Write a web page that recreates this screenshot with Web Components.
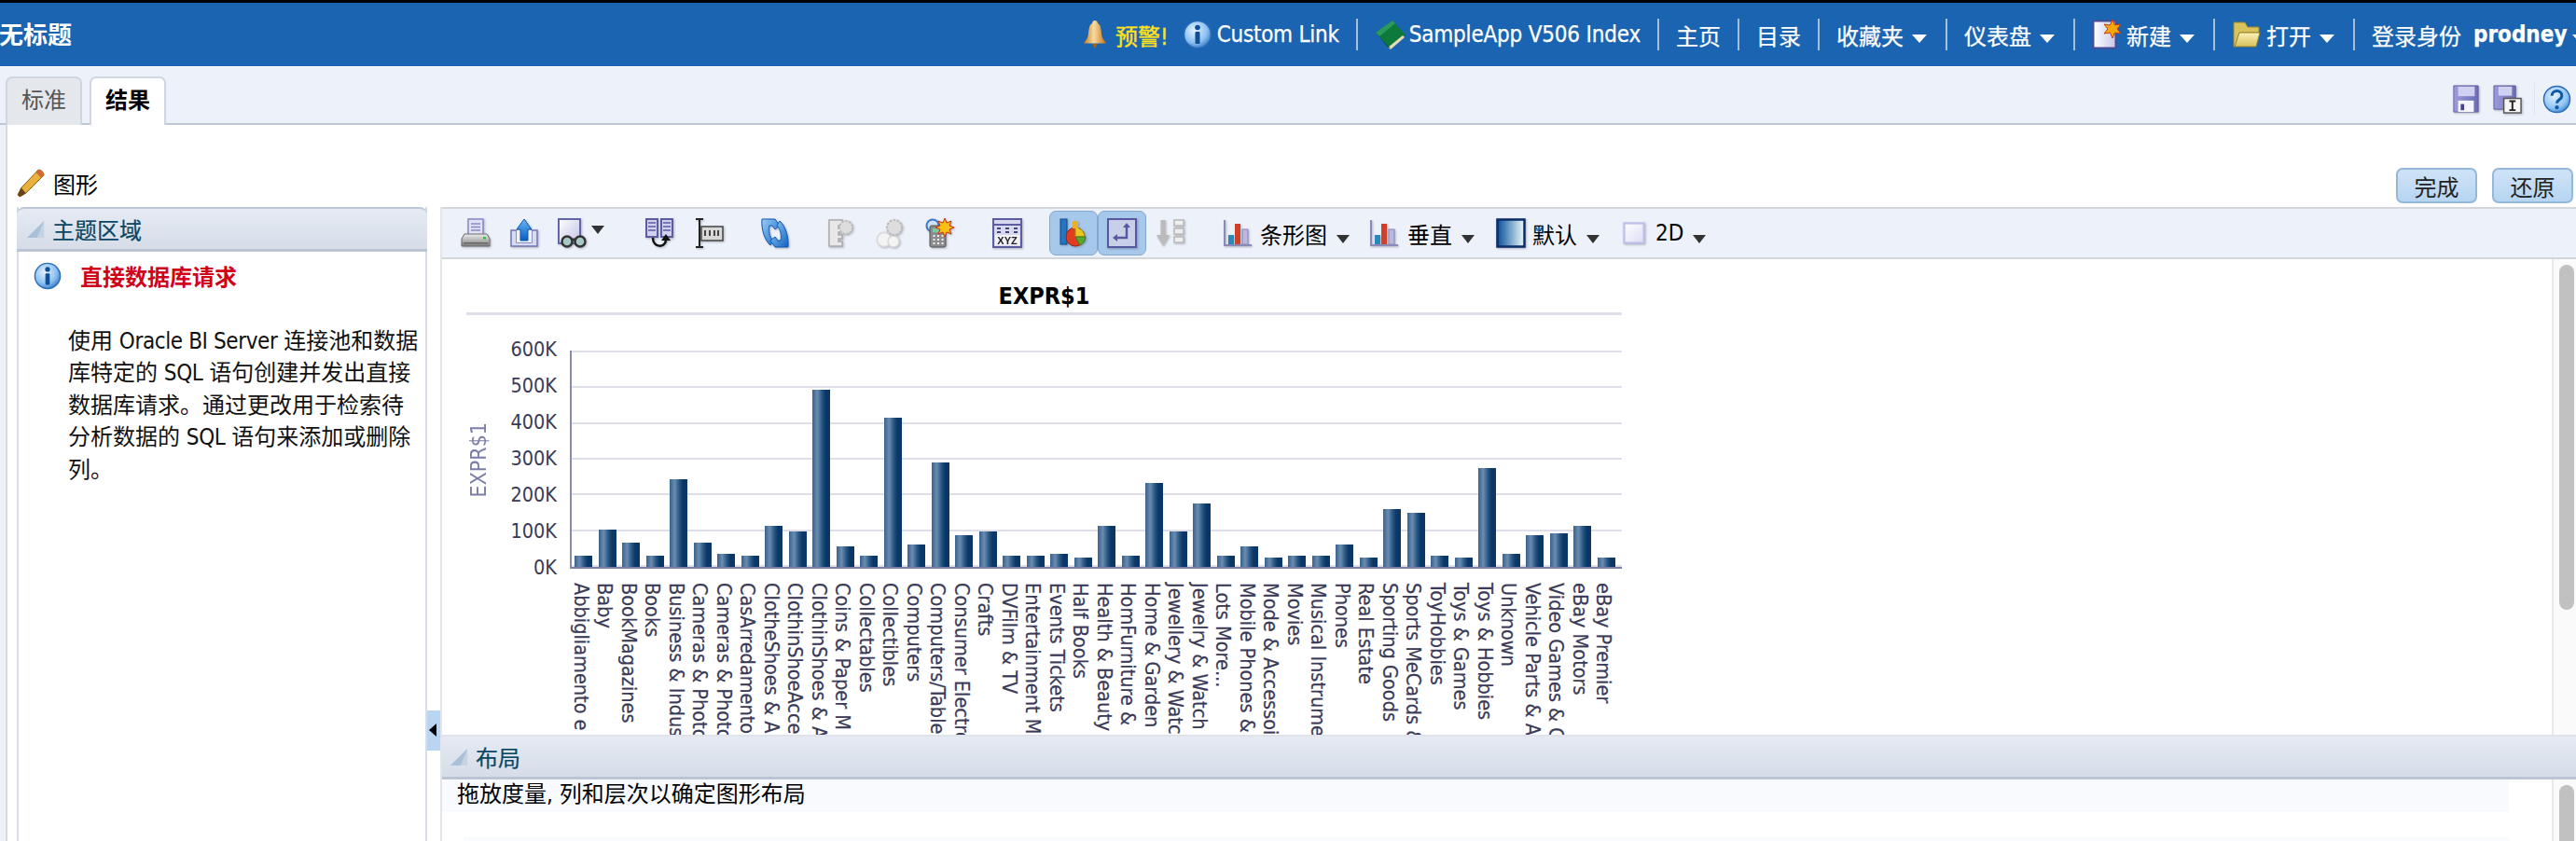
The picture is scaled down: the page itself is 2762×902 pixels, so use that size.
<!DOCTYPE html>
<html lang="zh">
<head>
<meta charset="utf-8">
<title>无标题</title>
<style>
  html, body { margin: 0; height: 902px; overflow: hidden; background: #fff; }
  body {
    --ui: "DejaVu Sans Condensed", "DejaVu Sans", "Noto Sans CJK SC", sans-serif;
    font: 24px var(--ui);
    display: flex;
    flex-direction: column;
    width: 2762px;
  }
</style>
</head>
<body>
<top-bar></top-bar>
<tab-strip></tab-strip>
<graph-page></graph-page>

<script>
const ICONS = {
  bell: `<defs><linearGradient id="g" x1="0" x2="1"><stop offset="0" stop-color="#c9780f"/><stop offset=".45" stop-color="#f8dca4"/><stop offset="1" stop-color="#c9700c"/></linearGradient></defs>
    <path d="M16 1c-2 0-3 1.5-3 3-4 2-3.500 9-4.500 14-.5 3-3.500 5-4.500 7.500h24c-1-2.500-4-4.500-4.500-7.500-1-5-.5-12-4.500-14 0-1.500-1-3-3-3z" fill="url(#g)"/><path d="M13 26h6l-3 5z" fill="#a8620c"/>`,
  info: `<defs><radialGradient id="g" cx=".4" cy=".35" r=".75"><stop offset="0" stop-color="#e4f2ff"/><stop offset=".6" stop-color="#8cc0f2"/><stop offset="1" stop-color="#2068bc"/></radialGradient></defs>
    <circle cx="16" cy="16" r="14.500" fill="url(#g)" stroke="#2a6cb8" stroke-width="1.500"/><circle cx="16" cy="8.500" r="2.800" fill="#0f4f96"/><rect x="13.500" y="13" width="5" height="13" rx="1" fill="#0f4f96"/>`,
  book: `<path d="M1 14 19 1l14 15-16 15z" fill="#0d7a3c"/><path d="M1 14 19 1l3 3L5 18z" fill="#2a9a58"/><path d="M14 30 30 17l2 2-15 13z" fill="#e8dcb8"/><path d="M5 18l9 12 3 1L1 14z" fill="#075a2a"/>`,
  newdoc: `<defs><linearGradient id="g" x1="0" x2="1"><stop offset="0" stop-color="#fff"/><stop offset="1" stop-color="#c8c8ec"/></linearGradient></defs>
    <rect x="1.500" y="1.500" width="24" height="29" fill="url(#g)" stroke="#4a4a96" stroke-width="2"/><path d="M22 0l2.500 6 6.500-1-4 5 4 5-6.500-1L22 20l-2.500-6-6.500 1 4-5-4-5 6.500 1z" fill="#f5a90a" stroke="#c83c10"/>`,
  folder: `<defs><linearGradient id="g" x1="0" y1="0" y2="1" x2="0"><stop offset="0" stop-color="#fbf3b8"/><stop offset="1" stop-color="#d8c05c"/></linearGradient></defs>
    <path d="M2 3h12l3 5h12v6H8L4 29H2z" fill="#d8c25c" stroke="#9a8428"/><path d="M8 14h22l-4 15H3z" fill="url(#g)" stroke="#9a8428"/>`,
  save: `<defs><linearGradient id="g" x1="0" x2="1"><stop offset="0" stop-color="#9c9cdc"/><stop offset="1" stop-color="#6c6cb8"/></linearGradient></defs>
    <path d="M2 1h28v30H2z" fill="url(#g)" stroke="#60609e"/><rect x="7" y="2" width="19" height="11" fill="#d0d0f0"/><rect x="7" y="18" width="18" height="13" fill="#f4f4fc"/><rect x="10" y="22" width="4" height="7" fill="#44448a"/>`,
  saveas: `<defs><linearGradient id="g" x1="0" x2="1"><stop offset="0" stop-color="#9c9cdc"/><stop offset="1" stop-color="#6c6cb8"/></linearGradient></defs>
    <path d="M1 1h24v26H1z" fill="url(#g)" stroke="#60609e"/><rect x="6" y="2" width="15" height="10" fill="#d0d0f0"/><rect x="12" y="15" width="19" height="16" fill="#f6f6f6" stroke="#555" stroke-width="1.500"/><path d="M18 18h7M18 28h7M21.500 18v10" stroke="#222" stroke-width="2" fill="none"/>`,
  help: `<defs><radialGradient id="g" cx=".4" cy=".35" r=".75"><stop offset="0" stop-color="#e4f2ff"/><stop offset=".65" stop-color="#90c4f4"/><stop offset="1" stop-color="#2a74c8"/></radialGradient></defs>
    <circle cx="16" cy="16" r="14.500" fill="url(#g)" stroke="#2a6cb8" stroke-width="1.500"/><path d="M10.500 12c0-7 11-7 11 0 0 4.500-5.500 4-5.500 8.500" fill="none" stroke="#0f5aa8" stroke-width="3.200"/><circle cx="16" cy="25" r="2.200" fill="#0f5aa8"/>`,
  pencil: `<path d="M24 1c3 0 6 3 6 6L10 27 3 31l-2-2 4-8z" fill="#eab03c" stroke="#8a5a18"/><path d="M24 1c3 0 6 3 6 6l-3 3-6-6z" fill="#d06a30"/><path d="M5 21l5 6-6 4-3-2z" fill="#6a4418"/>`,
  print: `<defs><linearGradient id="g" x1="0" y1="0" x2="0" y2="1"><stop offset="0" stop-color="#eee"/><stop offset="1" stop-color="#7c7c7c"/></linearGradient></defs>
    <rect x="8" y="1" width="16" height="17" fill="#e0e0f6" stroke="#8888c4" stroke-width="1.500"/><path d="M11 6h10M11 9.500h10M11 13h10" stroke="#8888c4" stroke-width="1.500"/><path d="M4 17h24l3 5v8H1v-8z" fill="url(#g)" stroke="#6c6c6c"/><rect x="24" y="20" width="3" height="2.500" fill="#3cb84c"/><rect x="3" y="26" width="26" height="1.500" fill="#666"/>`,
  upload: `<defs><linearGradient id="g" x1="0" y1="0" x2="0" y2="1"><stop offset="0" stop-color="#68b8f8"/><stop offset="1" stop-color="#0a5cc0"/></linearGradient></defs>
    <path d="M2 13h6v13h16V13h6v17H2z" fill="#d8dcf2" stroke="#7474b4" stroke-width="1.500"/><path d="M8 13v13h16V13" fill="#eef1fb"/><path d="M16 1l8 11h-4v12h-8V12H8z" fill="url(#g)" stroke="#0a58b0"/>`,
  binoc: `<defs><linearGradient id="g" x1="0" x2="1" y1="0" y2="1"><stop offset="0" stop-color="#fff"/><stop offset="1" stop-color="#c0c0e4"/></linearGradient></defs>
    <rect x="1" y="1" width="23" height="26" fill="url(#g)" stroke="#6464a8" stroke-width="2"/><circle cx="10" cy="25" r="5.500" fill="#a8c8c8" stroke="#333" stroke-width="2.500"/><circle cx="24" cy="25" r="5.500" fill="#a8c8c8" stroke="#333" stroke-width="2.500"/><path d="M15 23h4" stroke="#333" stroke-width="3"/>`,
  split: `<rect x="2" y="1" width="12" height="19" fill="#d0d0f0" stroke="#5c5ca0" stroke-width="2"/><rect x="18" y="1" width="12" height="19" fill="#d0d0f0" stroke="#5c5ca0" stroke-width="2"/><path d="M4 5h8M4 9h8M4 13h8M20 5h8M20 9h8M20 13h8" stroke="#5c5ca0" stroke-width="1.500"/><path d="M9 21c0 11 13 11 14 3" fill="none" stroke="#111" stroke-width="2.500"/><path d="M23 17l5 7h-10z" fill="#111"/>`,
  width: `<path d="M2 1h8M2 31h8M6 1v30" stroke="#222" stroke-width="2" fill="none"/><rect x="8" y="9" width="23" height="15" fill="#d8d8d8" stroke="#444" stroke-width="1.500"/><path d="M12 13v6M17 13v6M22 13v6M26 13v6" stroke="#444" stroke-width="2"/>`,
  refresh: `<defs><linearGradient id="g" x1="0" y1="0" x2="1" y2="1"><stop offset="0" stop-color="#9ccff8"/><stop offset="1" stop-color="#0e62c4"/></linearGradient></defs>
    <path d="M2 1h14l5 7-5 4-3-4h-3c-1 6 0 12 4 16l-3 5C5 24 1 12 2 1z" fill="url(#g)" stroke="#0e58b0"/><path d="M30 31H16l-5-7 5-4 3 4h3c1-6 0-12-4-16l3-5c6 5 10 17 9 28z" fill="url(#g)" stroke="#0e58b0"/>`,
  ruler: `<path d="M3 2h14v6h-4v3h4v4h-4v3h4v4h-4v3h4v5H3z" fill="#e8e8e8" stroke="#aaa" stroke-width="1.500"/><circle cx="21" cy="10" r="7" fill="#ddd" stroke="#bbb" stroke-width="2" stroke-dasharray="2.500 1.500"/>`,
  circles: `<circle cx="10" cy="23" r="7.500" fill="#f4f4f4" stroke="#d8d8d8" stroke-width="1.500"/><circle cx="20" cy="25" r="6" fill="#f4f4f4" stroke="#d8d8d8" stroke-width="1.500"/><circle cx="21" cy="10" r="8" fill="#ddd" stroke="#bbb" stroke-width="2" stroke-dasharray="2.500 1.500"/>`,
  calc: `<circle cx="9" cy="8" r="6.500" fill="#cfe2f6" stroke="#3a78c8" stroke-width="2"/><rect x="6" y="8" width="17" height="23" rx="2" fill="#8c8c8c" stroke="#555"/><rect x="9" y="11" width="11" height="4" fill="#7ec8a4"/><path d="M9.500 19h2M14 19h2M18.500 19h2M9.500 23h2M14 23h2M18.500 23h2M9.500 27h2M14 27h2M18.500 27h2" stroke="#eee" stroke-width="2"/><path d="M22 0l2 5 5-2-2 5 5 2-5 2 2 5-5-2-2 5-2-5-5 2 2-5-5-2 5-2-2-5 5 2z" fill="#f8c010" stroke="#c83010"/>`,
  xyz: `<rect x="1" y="1" width="30" height="30" fill="#d8d8ee" stroke="#5c5ca0" stroke-width="2"/><path d="M2 7h28" stroke="#5c5ca0" stroke-width="2"/><path d="M5 11h4M14 11h4M23 11h4M5 15h4M14 15h4M23 15h4" stroke="#44447c" stroke-width="2"/><rect x="3" y="18" width="26" height="11" fill="#f2f2f8"/><text x="16" y="28" text-anchor="middle" font-family="Liberation Sans" font-weight="700" font-size="11" fill="#222">XYZ</text>`,
  barpie: `<rect x="2" y="1" width="7" height="27" fill="#2874c0" stroke="#0e4a90"/><circle cx="18" cy="20" r="10" fill="#e03c20" stroke="#a02010"/><path d="M18 20V10a10 10 0 0 1 10 10z" fill="#e8c820" stroke="#a08810"/><path d="M18 20h11a10 10 0 0 1-6 9z" fill="#58a830" stroke="#3c7c20"/><rect x="15" y="3" width="6" height="8" fill="#e8b030"/>`,
  pivot: `<rect x="1" y="1" width="30" height="30" fill="#c8cfe8" stroke="#5858a0" stroke-width="2"/><path d="M21 8v13H10" fill="none" stroke="#5858a0" stroke-width="2.500"/><path d="M17 10l4-5 4 5zM11 17l-5 4 5 4z" fill="#5858a0"/>`,
  sortgrey: `<path d="M8 2v18" stroke="#bbb" stroke-width="5"/><path d="M1 18h14l-7 12z" fill="#bbb"/><rect x="20" y="2" width="10" height="6" fill="#eee" stroke="#bbb" stroke-width="1.500"/><rect x="20" y="11" width="10" height="6" fill="#eee" stroke="#bbb" stroke-width="1.500"/><rect x="20" y="20" width="10" height="6" fill="#eee" stroke="#bbb" stroke-width="1.500"/>`,
  bars: `<path d="M2 2v27h29" fill="none" stroke="#8a8ab8" stroke-width="2"/><rect x="6" y="18" width="6" height="10" fill="#2a88b8"/><rect x="13" y="6" width="6" height="22" fill="#d04028"/><rect x="21" y="12" width="6" height="16" fill="#b8b8e0" stroke="#8a8ab8"/>`,
  shaded: `<defs><linearGradient id="g" x1="0" x2="1"><stop offset="0" stop-color="#0a4f9c"/><stop offset=".9" stop-color="#d8ecf2"/></linearGradient></defs><rect x="1.500" y="1.500" width="29" height="29" fill="url(#g)" stroke="#0a2c68" stroke-width="2.500"/>`,
  flat: `<defs><linearGradient id="g" x1="0" x2="1" y1="0" y2="1"><stop offset="0" stop-color="#fff"/><stop offset="1" stop-color="#dcdcf4"/></linearGradient></defs><rect x="2" y="2" width="28" height="28" fill="url(#g)" stroke="#c0c0e8" stroke-width="3"/>`,
  tri: `<path d="M21 1v20H1z" fill="#a9c0d8"/><path d="M21 1v20h-8z" fill="#c4d4e4"/>`,
};

class UiIcon extends HTMLElement {
  connectedCallback() {
    const size = this.getAttribute("size") || 32;
    const name = this.getAttribute("name");
    const box = name === "tri" ? "0 0 22 22" : "0 0 32 32";
    this.attachShadow({ mode: "open" }).innerHTML = `
      <style>
        :host { display: block; flex: none; line-height: 0; width: ${size}px; height: ${size}px; }
        :host([shade]) svg { filter: drop-shadow(1px 1px 1px rgba(60, 60, 80, .35)); }
        svg { overflow: visible; }
      </style>
      <svg width="${size}" height="${size}" viewBox="${box}">${ICONS[name]}</svg>`;
  }
}
customElements.define("ui-icon", UiIcon);

class TopLink extends HTMLElement {
  connectedCallback() {
    const icon = this.getAttribute("icon");
    const menu = this.hasAttribute("menu");
    this.attachShadow({ mode: "open" }).innerHTML = `
      <style>
        :host { display: flex; flex: none; align-items: center; height: 34px; color: #fff; white-space: nowrap; -webkit-text-stroke: .25px currentColor; }
        :host([sep]) { border-left: 2px solid #a9bfd9; padding-left: 18px; margin-left: 18px; }
        ui-icon { margin-right: 5px; }
        i { width: 0; height: 0; margin: 9px 2px 0 9px; border: 8px solid transparent; border-top: 9px solid #fff; border-bottom: 0; }
      </style>
      ${icon ? `<ui-icon name="${icon}"></ui-icon>` : ""}<slot></slot>${menu ? "<i></i>" : ""}`;
  }
}
customElements.define("top-link", TopLink);

class TopBar extends HTMLElement {
  connectedCallback() {
    this.attachShadow({ mode: "open" }).innerHTML = `
      <style>
        :host { display: flex; flex: none; align-items: center; height: 68px; border-top: 3px solid #000; background: #1a64b1; overflow: hidden; border-bottom: 1px solid #fff; box-sizing: content-box; }
        h1 { margin: 0 0 4px -1px; width: 80px; flex: none; font: 700 26px var(--ui); color: #fff; }
        nav { display: flex; align-items: center; flex: none; margin-left: 1079px; }
        .warn { color: #ffe11a; margin-left: 1px; -webkit-text-stroke: .45px #ffe11a; }
        b { margin: 0 -3px 0 13px; }
      </style>
      <h1>无标题</h1>
      <nav>
        <top-link icon="bell"><span class="warn">预警!</span></top-link>
        <top-link icon="info" style="margin-left:15px;letter-spacing:-.25px">Custom Link</top-link>
        <top-link icon="book" sep style="letter-spacing:-.2px">SampleApp V506 Index</top-link>
        <top-link sep>主页</top-link>
        <top-link sep>目录</top-link>
        <top-link sep menu>收藏夹</top-link>
        <top-link sep menu>仪表盘</top-link>
        <top-link sep icon="newdoc" menu>新建</top-link>
        <top-link sep icon="folder" menu>打开</top-link>
        <top-link sep menu>登录身份<b>prodney</b></top-link>
      </nav>`;
  }
}
customElements.define("top-bar", TopBar);

class TabStrip extends HTMLElement {
  connectedCallback() {
    this.attachShadow({ mode: "open" }).innerHTML = `
      <style>
        :host { display: flex; flex: none; align-items: flex-end; height: 60px; padding-left: 6px; background: #edf1f9; border-bottom: 2px solid #c0c8d8; }
        div { box-sizing: border-box; width: 82px; height: 52px; margin: 0 8px -2px 0; text-align: center; line-height: 48px; color: #555; background: #e4e7eb; border: 2px solid #d0d6e0; border-bottom: 0; border-radius: 7px 7px 0 0; }
        div.on { background: #fff; color: #000; font-weight: 700; }
        section { margin: 0 0 9px auto; display: flex; align-items: center; }
        u { width: 1px; height: 34px; background: #dfe3ea; margin: 0 8px 0 13px; }
      </style>
      <div>标准</div><div class="on">结果</div>
      <section>
        <ui-icon name="save" size="30" shade></ui-icon>
        <ui-icon name="saveas" size="31" style="margin-left:14px" shade></ui-icon>
        <u></u>
        <ui-icon name="help" size="31" style="margin-right:5px"></ui-icon>
      </section>`;
  }
}
customElements.define("tab-strip", TabStrip);

class ScrollBar extends HTMLElement {
  connectedCallback() {
    this.attachShadow({ mode: "open" }).innerHTML = `
      <style>
        :host { display: block; flex: none; box-sizing: border-box; width: 26px; padding: 6px 2px 0 6px; border-left: 2px solid #e9e9e9; background: #fafafa; overflow: hidden; }
        div { height: ${this.getAttribute("thumb")}px; background: #c1c1c1; border-radius: 8px; }
      </style>
      <div></div>`;
  }
}
customElements.define("scroll-bar", ScrollBar);

class PanelHead extends HTMLElement {
  connectedCallback() {
    this.attachShadow({ mode: "open" }).innerHTML = `
      <style>
        :host { display: flex; flex: none; align-items: center; box-sizing: border-box; gap: 8px; color: #0b4662; background: linear-gradient(#e5eaf3, #d6dde8); border-bottom: 3px solid #bac4d3; -webkit-text-stroke: .2px #0b4662; }
      </style>
      <ui-icon name="tri" size="20"></ui-icon><slot></slot>`;
  }
}
customElements.define("panel-head", PanelHead);

class SubjectPanel extends HTMLElement {
  connectedCallback() {
    this.attachShadow({ mode: "open" }).innerHTML = `
      <style>
        :host { display: flex; flex-direction: column; flex: none; box-sizing: border-box; width: 440px; border: solid #d8dee8; border-width: 0 2px 0 2px; }
        panel-head { height: 48px; margin: 0 -2px; padding-left: 10px; border-top: 2px solid #bcc6d4; border-radius: 8px 8px 0 0; }
        .msg { display: flex; align-items: center; gap: 20px; padding: 8px 0 0 16px; color: #d0021b; font-weight: 700; }
        p { margin: 36px 0 0 53px; line-height: 34.4px; color: #111; white-space: nowrap; }
        span.l { letter-spacing: -.4px; }
      </style>
      <panel-head>主题区域</panel-head>
      <div class="msg"><ui-icon name="info" size="30"></ui-icon><span>直接数据库请求</span></div>
      <p>使用 <span class="l">Oracle BI Server</span> 连接池和数据<br>库特定的 <span class="l">SQL</span> 语句创建并发出直接<br>数据库请求。通过更改用于检索待<br>分析数据的 <span class="l">SQL</span> 语句来添加或删除<br>列。</p>`;
  }
}
customElements.define("subject-panel", SubjectPanel);

class ToolBar extends HTMLElement {
  connectedCallback() {
    const item = (name, gap, size) => `<ui-icon name="${name}" size="${size || 32}" style="margin-left:${gap}px" shade></ui-icon>`;
    const menu = (name, label, gap, textGap, size) => `${item(name, gap, size)}<span style="margin-left:${textGap}px">${label}</span><i></i>`;
    this.attachShadow({ mode: "open" }).innerHTML = `
      <style>
        :host { display: flex; flex: none; align-items: center; box-sizing: border-box; height: 56px; background: #edf1f9; border: solid #d3d6da; border-width: 2px 0; white-space: nowrap; }
        i { flex: none; width: 0; height: 0; margin: 12px 0 0 10px; border: 7.500px solid transparent; border-top: 9px solid #333; border-bottom: 0; }
        .down { margin: -8px 0 0 4px; }
        .on { display: flex; align-items: center; justify-content: center; box-sizing: border-box; width: 52px; height: 48px; background: #a6c8ea; border: 1px solid #84a9cc; border-radius: 7px; flex: none; }
        span { flex: none; color: #000; }
      </style>
      ${item("print", 20)}${item("upload", 20)}${item("binoc", 20)}<i class="down"></i>
      ${item("split", 43)}${item("width", 21)}${item("refresh", 39)}${item("ruler", 39)}${item("circles", 20)}${item("calc", 21)}${item("xyz", 41)}
      <div class="on" style="margin-left:29px"><ui-icon name="barpie" shade></ui-icon></div><div class="on"><ui-icon name="pivot" shade></ui-icon></div>
      ${item("sortgrey", 10)}
      ${menu("bars", "条形图", 40, 8)}${menu("bars", "垂直", 21, 9)}${menu("shaded", "默认", 23, 7)}${menu("flat", "2D", 25, 11, 24)}`;
  }
}
customElements.define("tool-bar", ToolBar);

const CHART_ROWS = [
  ["Abbigliamento e", 598], ["Baby", 570], ["BookMagazines", 584], ["Books", 598],
  ["Business & Indus", 516], ["Cameras & Photo", 584], ["Cameras & Photo", 596], ["CasArredamento", 598],
  ["ClotheShoes & A", 566], ["ClothinShoeAcce", 572], ["ClothinShoes & A", 420], ["Coins & Paper M", 588],
  ["Collectables", 598], ["Collectibles", 450], ["Computers", 586], ["Computers/Table", 498],
  ["Consumer Electro", 576], ["Crafts", 572], ["DVFilm & TV", 598], ["Entertainment M", 598],
  ["Events Tickets", 596], ["Half Books", 600], ["Health & Beauty", 566], ["HomFurniture &", 598],
  ["Home & Garden", 520], ["Jewellery & Watc", 572], ["Jewelry & Watch", 542], ["Lots More...", 598],
  ["Mobile Phones &", 588], ["Mode & Accessoi", 600], ["Movies", 598], ["Musical Instrume", 598],
  ["Phones", 586], ["Real Estate", 600], ["Sporting Goods", 548], ["Sports MeCards &", 552],
  ["ToyHobbies", 598], ["Toys & Games", 600], ["Toys & Hobbies", 504], ["Unknown", 596],
  ["Vehicle Parts & A", 576], ["Video Games & C", 574], ["eBay Motors", 566], ["eBay Premier", 600],
];

class BarChart extends HTMLElement {
  connectedCallback() {
    const ticks = ["600K", "500K", "400K", "300K", "200K", "100K", "0K"];
    this.attachShadow({ mode: "open" }).innerHTML = `
      <style>
        :host { display: block; flex: 1; min-width: 0; overflow: hidden; padding-left: 26px; color: #3a3a58; font-size: 21.500px; }
        h2 { box-sizing: border-box; width: 1239px; height: 60px; margin: 0; padding-top: 25px; text-align: center; font: 700 25px var(--ui); color: #000; border-bottom: 3px solid #dfdfe9; }
        .grid { display: grid; grid-template-columns: 26px 85px 1128px; margin-top: 38px; }
        .title { writing-mode: vertical-rl; transform: rotate(180deg); align-self: center; justify-self: center; font-size: 23px; color: #7c7ea8; }
        .ticks { display: flex; flex-direction: column; justify-content: space-between; align-items: flex-end; height: 258px; margin: -13px 0; padding-right: 14px; }
        .ticks div { height: 24px; line-height: 24px; }
        .plot { position: relative; height: 232px; border-left: 2px solid #8a8cae; border-bottom: 2px solid #7c7ea2; }
        .lines { position: absolute; inset: 0; display: flex; flex-direction: column; justify-content: space-between; }
        .lines div { height: 2px; background: #dfdfe9; }
        .bars { position: relative; display: grid; grid-template-columns: repeat(44, 25.5px); align-items: end; height: 100%; }
        .bars div { justify-self: center; width: 19px; background: linear-gradient(90deg, #38628e, #6a8cb0 28%, #27557f 55%, #0a3768 75%, #0a3768); }
        .labels { grid-column: 3; display: grid; grid-template-columns: repeat(44, 25.5px); margin: 15px 0 0 2px; -webkit-text-stroke: .2px #3a3a58; }
        .labels div { writing-mode: vertical-rl; white-space: nowrap; justify-self: center; padding-right: 5px; }
      </style>
      <h2>EXPR$1</h2>
      <div class="grid">
        <div class="title">EXPR$1</div>
        <div class="ticks">${ticks.map(t => `<div>${t}</div>`).join("")}</div>
        <div class="plot">
          <div class="lines">${ticks.map(() => "<div></div>").join("")}</div>
          <div class="bars">${CHART_ROWS.map(r => `<div style="height:${610 - r[1]}px"></div>`).join("")}</div>
        </div>
        <div class="labels">${CHART_ROWS.map(r => `<div>${r[0].replace(/&/g, "&amp;")}</div>`).join("")}</div>
      </div>`;
  }
}
customElements.define("bar-chart", BarChart);

class LayoutPanel extends HTMLElement {
  connectedCallback() {
    this.attachShadow({ mode: "open" }).innerHTML = `
      <style>
        :host { display: flex; flex-direction: column; flex: none; height: 114px; border-top: 2px solid #dfe4ec; box-sizing: border-box; }
        panel-head { height: 46px; padding-left: 8px; }
        .body { flex: 1; display: flex; min-height: 0; }
        .hint { flex: 1; margin-right: 46px; display: flex; flex-direction: column; justify-content: space-between; }
        .hint div { height: 35px; padding-left: 16px; line-height: 32px; background: #f9fafe; color: #000; }
        .hint u { display: block; height: 4px; margin-left: 23px; background: #f9fafe; }
      </style>
      <panel-head>布局</panel-head>
      <div class="body">
        <div class="hint"><div>拖放度量, 列和层次以确定图形布局</div><u></u></div>
        <scroll-bar thumb="80"></scroll-bar>
      </div>`;
  }
}
customElements.define("layout-panel", LayoutPanel);

class GraphPage extends HTMLElement {
  connectedCallback() {
    this.attachShadow({ mode: "open" }).innerHTML = `
      <style>
        :host { display: flex; flex-direction: column; flex: 1; min-height: 0; margin-left: 6px; border-left: 2px solid #d5dbe6; background: #fff; box-shadow: -6px 0 0 #edf1f9; }
        .head { display: flex; flex: none; align-items: flex-end; height: 88px; box-sizing: border-box; padding: 0 3px 4px 10px; }
        .name { display: flex; align-items: center; gap: 8px; color: #000; margin-bottom: 4px; }
        button { font: inherit; width: 87px; height: 38px; padding: 0; color: #222; background: linear-gradient(#cfe3f7, #b6d5f1); border: 2px solid #93b8da; border-radius: 7px; }
        button:first-of-type { margin: 0 16px 0 auto; }
        .body { flex: 1; display: flex; min-height: 0; padding-left: 10px; }
        .split { position: relative; flex: none; width: 14px; }
        .split div { position: absolute; top: 540px; left: 0; width: 14px; height: 43px; background: #b9d5f1; }
        .split div::after { content: ""; position: absolute; top: 14px; left: 2px; border: 7px solid transparent; border-left: 0; border-right: 8px solid #000; }
        .work { flex: 1; min-width: 0; display: flex; flex-direction: column; border-left: 2px solid #e2e5ea; }
        .main { flex: 1; display: flex; min-height: 0; }
      </style>
      <div class="head">
        <div class="name"><ui-icon name="pencil" size="31"></ui-icon><span>图形</span></div>
        <button>完成</button><button>还原</button>
      </div>
      <div class="body">
        <subject-panel></subject-panel>
        <div class="split"><div></div></div>
        <div class="work">
          <tool-bar></tool-bar>
          <div class="main"><bar-chart></bar-chart><scroll-bar thumb="370"></scroll-bar></div>
          <layout-panel></layout-panel>
        </div>
      </div>`;
  }
}
customElements.define("graph-page", GraphPage);
</script>
</body>
</html>
